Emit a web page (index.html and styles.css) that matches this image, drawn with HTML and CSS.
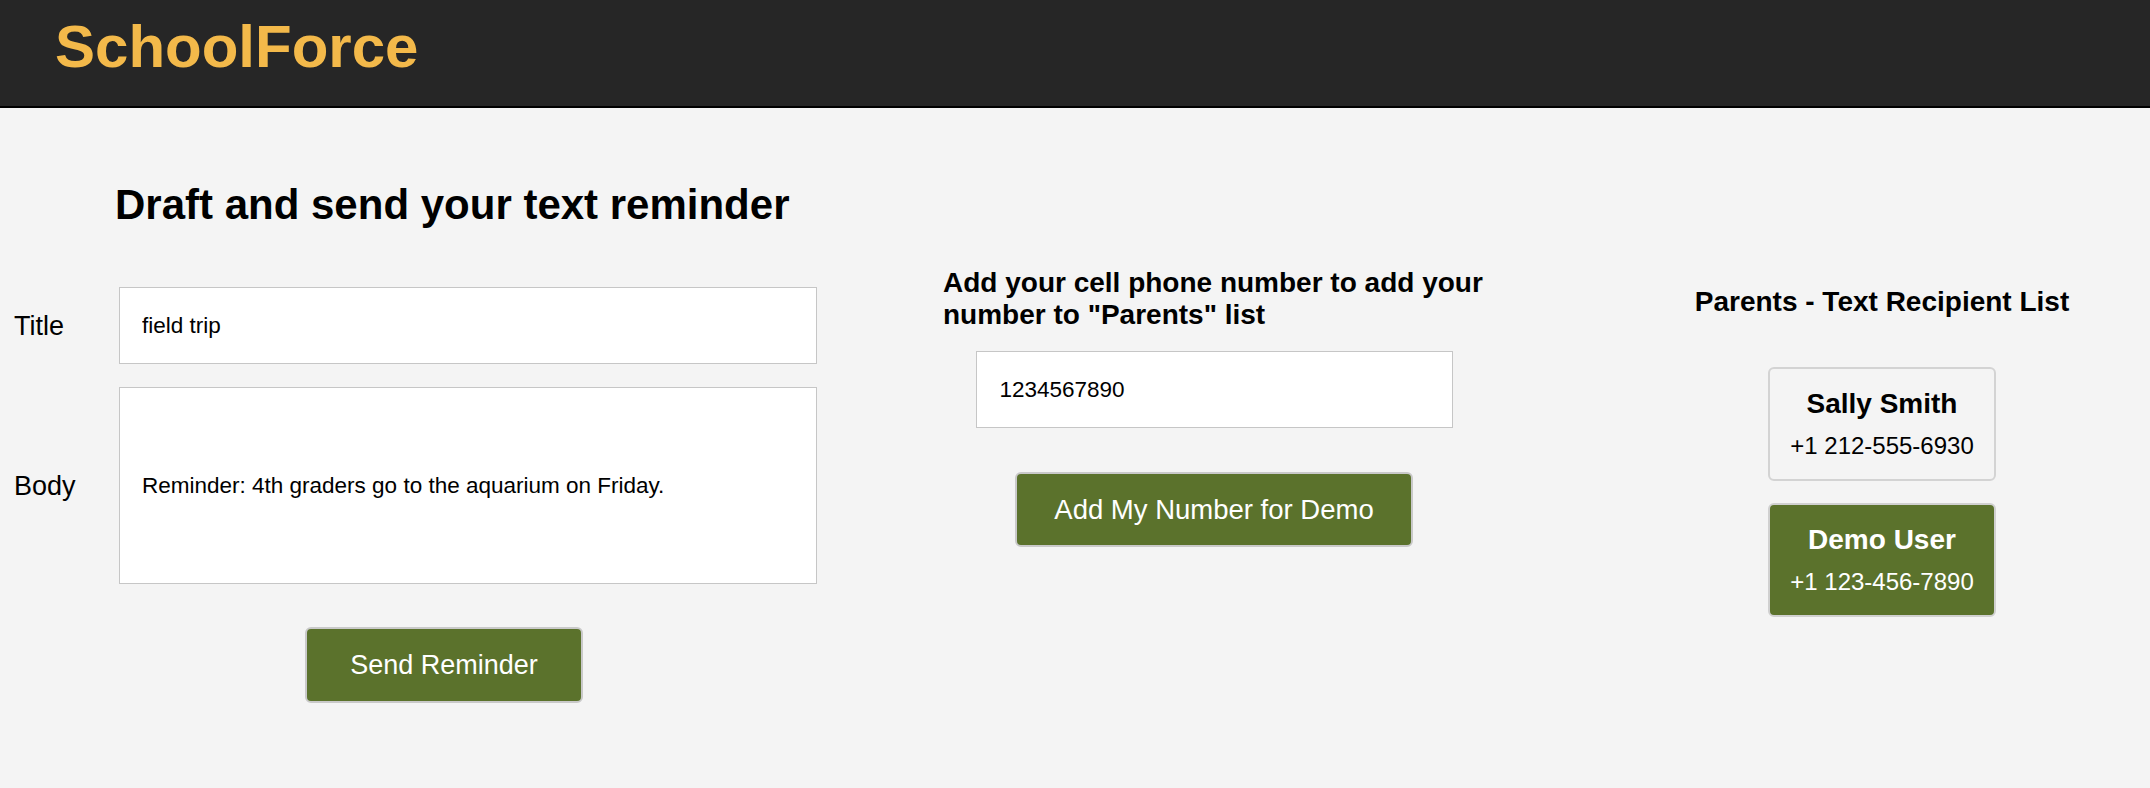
FILE: index.html
```html
<!DOCTYPE html>
<html lang="en">
<head>
<meta charset="utf-8">
<title>SchoolForce</title>
<link rel="stylesheet" href="styles.css">
</head>
<body>
<header class="topbar">
  <h1 class="logo">SchoolForce</h1>
</header>
<main class="layout">
  <section class="col col-draft">
    <h2 class="draft-title">Draft and send your text reminder</h2>
    <div class="field-row">
      <label class="field-label" for="title">Title</label>
      <input class="field-input" id="title" type="text" value="field trip">
    </div>
    <div class="field-row field-row-body">
      <label class="field-label" for="body">Body</label>
      <input class="field-input field-input-body" id="body" type="text" value="Reminder: 4th graders go to the aquarium on Friday.">
    </div>
    <div class="send-row">
      <button class="btn btn-send" type="button">Send Reminder</button>
    </div>
  </section>
  <section class="col col-add">
    <div class="add-inner">
      <h3 class="col-heading">Add your cell phone number to add your number to "Parents" list</h3>
      <input class="field-input phone-input" type="text" value="1234567890">
      <button class="btn btn-add" type="button">Add My Number for Demo</button>
    </div>
  </section>
  <section class="col col-list">
    <h3 class="col-heading list-heading">Parents - Text Recipient List</h3>
    <div class="cards">
      <div class="card">
        <div class="card-name">Sally Smith</div>
        <div class="card-phone">+1 212-555-6930</div>
      </div>
      <div class="card card-active">
        <div class="card-name">Demo User</div>
        <div class="card-phone">+1 123-456-7890</div>
      </div>
    </div>
  </section>
</main>
</body>
</html>
```

FILE: styles.css
```css
* {
  box-sizing: border-box;
}

html, body {
  margin: 0;
  padding: 0;
}

body {
  background: #f4f4f4;
  color: #000;
  font-family: "Liberation Sans", Arial, Helvetica, sans-serif;
  width: 2150px;
  height: 788px;
  overflow: hidden;
}

.topbar {
  height: 108px;
  background: #262626;
  border-bottom: 2px solid #000;
  padding: 12px 0 0 55px;
}

.logo {
  margin: 0;
  font-size: 60px;
  line-height: 70px;
  font-weight: bold;
  color: #f3b94a;
}

.layout {
  display: grid;
  grid-template-columns: 943px 671px 536px;
  align-items: start;
}

.col {
  display: flex;
  flex-direction: column;
}

.draft-title {
  margin: 73px 0 0 115px;
  font-size: 42px;
  line-height: 48px;
  font-weight: bold;
}

.field-row {
  display: flex;
  align-items: center;
  margin-top: 58px;
}

.field-row-body {
  margin-top: 23px;
}

.field-label {
  width: 119px;
  padding-left: 14px;
  font-size: 27px;
  line-height: 32px;
}

.field-input {
  width: 698px;
  height: 77px;
  border: 1px solid #c6c6c6;
  background: #fff;
  padding: 0 0 0 22px;
  font-family: "Liberation Sans", Arial, Helvetica, sans-serif;
  font-size: 22.5px;
  color: #000;
  outline: none;
  border-radius: 0;
}

.field-input-body {
  height: 197px;
}

.send-row {
  margin-top: 43px;
  padding-left: 305px;
}

.btn {
  display: block;
  background: #5b722c;
  color: #fff;
  border: 2px solid #c9c9c9;
  border-radius: 6px;
  font-family: "Liberation Sans", Arial, Helvetica, sans-serif;
  font-size: 27px;
  padding: 0;
  cursor: pointer;
}

.btn-send {
  width: 278px;
  height: 76px;
}

.add-inner {
  width: 542px;
  display: flex;
  flex-direction: column;
  align-items: center;
}

.col-heading {
  margin: 159px 0 0;
  font-size: 28px;
  line-height: 32px;
  font-weight: bold;
  align-self: stretch;
}

.phone-input {
  width: 477px;
  margin-top: 20px;
  padding-left: 23px;
}

.btn-add {
  width: 398px;
  height: 75px;
  margin-top: 44px;
  font-size: 27.5px;
}

.col-list {
  align-items: center;
}

.list-heading {
  margin-top: 178px;
  text-align: center;
}

.cards {
  margin-top: 49px;
  display: flex;
  flex-direction: column;
  gap: 22px;
}

.card {
  width: 228px;
  height: 114px;
  border: 2px solid #d3d3d3;
  border-radius: 6px;
  padding: 19px 0 19px;
  text-align: center;
  background: #f4f4f4;
}

.card-active {
  background: #5b722c;
  color: #fff;
  border-color: #d0d0d0;
}

.card-name {
  font-size: 28px;
  line-height: 32px;
  font-weight: bold;
}

.card-phone {
  margin-top: 12px;
  font-size: 24px;
  line-height: 28px;
}
```
